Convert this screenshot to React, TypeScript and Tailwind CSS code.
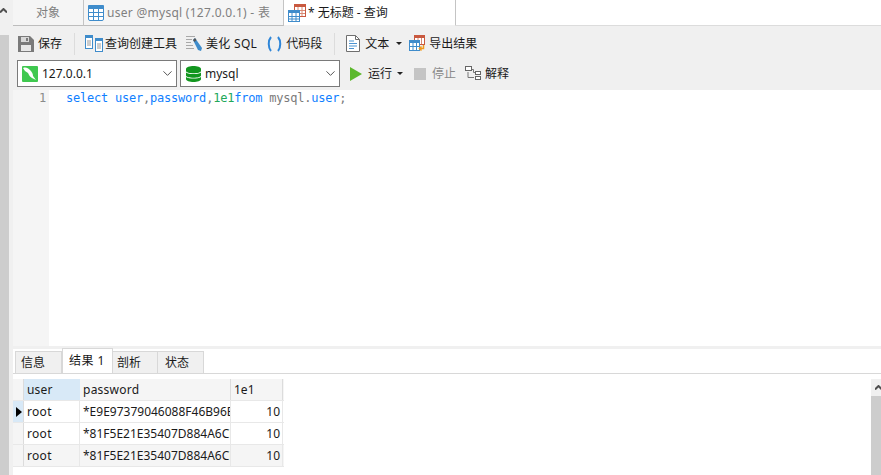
import { ChevronDown } from 'lucide-react';

const uiFont = { fontFamily: '"Noto Sans", "Noto Sans CJK SC", sans-serif' };

function GridIcon({ size = 16 }: { size?: number }) {
  return (
    <svg width={size} height={size} viewBox="0 0 16 16" className="shrink-0">
      <rect x="0.5" y="0.5" width="15" height="15" rx="1.5" fill="#fff" stroke="#3f8ccb" />
      <rect x="0" y="0" width="16" height="4" rx="1" fill="#3f8ccb" />
      <path d="M5.5 4v11M10.5 4v11M1 7.5h14M1 11.5h14" stroke="#3f8ccb" strokeWidth="1" />
    </svg>
  );
}

function QueryTabIcon() {
  return (
    <svg width="18" height="18" viewBox="0 0 18 18" className="shrink-0">
      <rect x="6.5" y="0.5" width="11" height="12" fill="#fff" stroke="#c9593f" />
      <rect x="6" y="0" width="12" height="3" fill="#c9593f" />
      <path d="M10 3v9M14 3v9M7 6.5h10M7 9.5h10" stroke="#d98a75" />
      <rect x="0.5" y="6.5" width="11" height="11" fill="#fff" stroke="#3f8ccb" />
      <rect x="0" y="6" width="12" height="3" fill="#3f8ccb" />
      <path d="M4 9v8M8 9v8M1 12.5h10M1 15h10" stroke="#3f8ccb" />
    </svg>
  );
}

function SaveIcon() {
  return (
    <svg width="16" height="16" viewBox="0 0 16 16" className="shrink-0">
      <path d="M0 0h12l4 4v12H0z" fill="#7a7a7a" />
      <rect x="3" y="1" width="8" height="5" fill="#d8d8d8" />
      <rect x="8" y="2" width="2" height="3" fill="#7a7a7a" />
      <rect x="3" y="9" width="10" height="6" fill="#e8e8e8" />
    </svg>
  );
}

function BuilderIcon() {
  return (
    <svg width="18" height="17" viewBox="0 0 18 17" className="shrink-0">
      <rect x="0.5" y="0.5" width="7" height="13" fill="#fff" stroke="#3f8ccb" />
      <rect x="0" y="0" width="8" height="3" fill="#3f8ccb" />
      <path d="M2 6h4M2 8h4M2 10h4" stroke="#9a9a9a" />
      <rect x="10.5" y="3.5" width="7" height="13" fill="#fff" stroke="#3f8ccb" />
      <rect x="10" y="3" width="8" height="3" fill="#3f8ccb" />
      <path d="M12 9h4M12 11h4M12 13h4" stroke="#9a9a9a" />
    </svg>
  );
}

function BeautifyIcon() {
  return (
    <svg width="17" height="17" viewBox="0 0 17 17" className="shrink-0">
      <path d="M0 1.5h9M0 4.5h6M0 7.5h5M0 10.5h7M0 13.5h8" stroke="#a8a8a8" strokeWidth="1" />
      <path d="M7 5l2-2 7 10-1 3-3-1z" fill="#3f8ccb" />
      <path d="M7 5l2-2 1.5 2-2 2z" fill="#555" />
    </svg>
  );
}

function SnippetIcon() {
  return (
    <svg width="15" height="16" viewBox="0 0 15 16" className="shrink-0">
      <path d="M4 1C1 4.5 1 11.5 4 15M11 1c3 3.5 3 10.5 0 14" fill="none" stroke="#2f86d8" strokeWidth="2" />
    </svg>
  );
}

function TextIcon() {
  return (
    <svg width="14" height="17" viewBox="0 0 14 17" className="shrink-0">
      <path d="M0.5 0.5h9l4 4v12h-13z" fill="#fff" stroke="#6f6f6f" />
      <path d="M9.5 0.5v4h4" fill="none" stroke="#6f6f6f" />
      <path d="M3 6h5M3 8.5h8M3 11h8M3 13.5h5" stroke="#4b93d1" />
    </svg>
  );
}

function ExportIcon() {
  return (
    <svg width="17" height="17" viewBox="0 0 17 17" className="shrink-0">
      <rect x="5.5" y="0.5" width="10" height="9" fill="#fff" stroke="#c9593f" />
      <rect x="5" y="0" width="11" height="3" fill="#c9593f" />
      <path d="M9 3v6M12.5 3v6" stroke="#d98a75" />
      <rect x="0.5" y="5.5" width="10" height="10" fill="#fff" stroke="#3f8ccb" />
      <rect x="0" y="5" width="11" height="3" fill="#3f8ccb" />
      <path d="M4 8v7M7.5 8v7M1 11.5h9" stroke="#3f8ccb" />
      <path d="M14.5 10v3.5h-4M12.5 11.5l-2 2 2 2" fill="none" stroke="#f09a1e" strokeWidth="1.5" />
    </svg>
  );
}

function DolphinIcon() {
  return (
    <svg width="16" height="16" viewBox="0 0 16 16" className="shrink-0">
      <rect width="16" height="16" rx="1" fill="#3fc84f" />
      <path d="M1 2c3-1 5 0 7 2 2 2 3 4 3 6l3 4-4-2c-2-1-3-3-4-5L3 5z" fill="#fff" />
    </svg>
  );
}

function DatabaseIcon() {
  return (
    <svg width="15" height="16" viewBox="0 0 15 16" className="shrink-0">
      <path d="M0 3c0-4 15-4 15 0v2c0 3-15 3-15 0z" fill="#12961f" />
      <path d="M0 6.5c3 2 12 2 15 0v3c0 3-15 3-15 0z" fill="#12961f" />
      <path d="M0 11c3 2 12 2 15 0v2c0 4-15 4-15 0z" fill="#12961f" />
    </svg>
  );
}

function ExplainIcon() {
  return (
    <svg width="16" height="15" viewBox="0 0 16 15" className="shrink-0">
      <path d="M3 6v5.5h6M6 3.5h2.5v3H11" fill="none" stroke="#777" />
      <rect x="0.5" y="0.5" width="6" height="4" fill="#fff" stroke="#666" />
      <rect x="10.5" y="5.5" width="5" height="3" fill="#fff" stroke="#666" />
      <rect x="10.5" y="10.5" width="5" height="3" fill="#fff" stroke="#666" />
    </svg>
  );
}

function ScrollArrow() {
  return (
    <svg width="7" height="5" viewBox="0 0 7 5" className="block">
      <path d="M0 4.5l3.5-3.5L7 4.5" fill="none" stroke="#505050" strokeWidth="2" />
    </svg>
  );
}

function Caret() {
  return <span className="block w-0 h-0 border-x-[3px] border-x-transparent border-t-[3px] border-t-[#222]" />;
}

function Divider() {
  return <div className="w-px h-[22px] bg-[#dcdcdc]" />;
}

function ComboBox({ padding, icon, label }: { padding: string; icon: React.ReactNode; label: string }) {
  return (
    <div className={`w-[160px] h-[27px] bg-white border border-[#7a7a7a] flex items-center ${padding} pr-[1px] text-[12px] text-[#1a1a1a]`}>
      {icon}
      <span className="ml-[4px] flex-1">{label}</span>
      <ChevronDown className="w-[15px] h-[15px] text-[#555]" strokeWidth={1.6} />
    </div>
  );
}

const rows = [
  { user: 'root', password: '*E9E97379046088F46B96BDA7', value: '10', current: true, height: 'h-[22px]' },
  { user: 'root', password: '*81F5E21E35407D884A6CD4A7', value: '10', current: false, height: 'h-[22px]' },
  { user: 'root', password: '*81F5E21E35407D884A6CD4A7', value: '10', current: false, height: 'h-[23px]' },
];

export default function App() {
  return (
    <div className="w-[881px] h-[475px] flex overflow-hidden bg-white text-[12px] text-[#1a1a1a]" style={uiFont}>
      <div className="w-[9px] shrink-0 flex flex-col bg-[#cdcdcd]">
        <div className="h-[35px] bg-[#f0f0f0] pt-[8px]">
          <ScrollArrow />
        </div>
      </div>
      <div className="w-[4px] shrink-0 bg-[#f0f0f0]" />

      <div className="flex-1 flex flex-col min-w-0">
        <div className="h-[26px] shrink-0 flex bg-white">
          <div className="w-[71px] flex items-center justify-center bg-[#f5f5f5] border-r border-b border-r-[#c4c4c4] border-b-[#bdbdbd] text-[#808080]">对象</div>
          <div className="w-[200px] flex items-center pl-[4px] gap-[3px] bg-[#f5f5f5] border-r border-b border-r-[#c4c4c4] border-b-[#bdbdbd] text-[#808080] tracking-[0.28px]">
            <GridIcon />
            <span>user @mysql (127.0.0.1) - 表</span>
          </div>
          <div className="w-[172px] flex items-center pl-[4px] gap-[2px] bg-white border-r border-b border-r-[#c4c4c4] border-b-[#f0f0f0] text-[#1a1a1a]">
            <QueryTabIcon />
            <span>* 无标题 - 查询</span>
          </div>
          <div className="flex-1 border-b border-[#dcdcdc]" />
        </div>

        <div className="h-[34px] shrink-0 bg-[#f0f0f0] flex items-center pl-[5px] pt-[1px]">
          <div className="flex items-center gap-[4px]"><SaveIcon /><span>保存</span></div>
          <div className="ml-[12px]"><Divider /></div>
          <div className="ml-[10px] flex items-center gap-[2px]"><BuilderIcon /><span>查询创建工具</span></div>
          <div className="ml-[9px] flex items-center gap-[3px]"><BeautifyIcon /><span className="tracking-[0.3px]">美化 SQL</span></div>
          <div className="ml-[10px] flex items-center gap-[4px]"><SnippetIcon /><span>代码段</span></div>
          <div className="ml-[12px]"><Divider /></div>
          <div className="ml-[11px] flex items-center gap-[5px]"><TextIcon /><span>文本</span></div>
          <div className="ml-[7px]"><Caret /></div>
          <div className="ml-[7px] flex items-center gap-[3px]"><ExportIcon /><span>导出结果</span></div>
        </div>

        <div className="h-[30px] shrink-0 bg-[#f0f0f0] flex items-start pl-[4px] gap-[3px]">
          <ComboBox padding="pl-[4px]" icon={<DolphinIcon />} label="127.0.0.1" />
          <ComboBox padding="pl-[5px]" icon={<DatabaseIcon />} label="mysql" />
          <div className="h-[27px] flex items-center ml-[7px]">
            <span className="block w-0 h-0 border-y-[7px] border-y-transparent border-l-[12px] border-l-[#5cb82c]" />
            <span className="ml-[6px]">运行</span>
            <span className="ml-[5px]"><Caret /></span>
            <span className="block ml-[11px] w-[12px] h-[12px] bg-[#c4c4c4]" />
            <span className="ml-[6px] text-[#8a8a8a]">停止</span>
            <span className="ml-[9px]"><ExplainIcon /></span>
            <span className="ml-[4px]">解释</span>
          </div>
        </div>

        <div className="h-[256px] shrink-0 flex bg-white font-['DejaVu_Sans_Mono',monospace] text-[12px] tracking-[-0.22px] leading-[17px]">
          <div className="w-[36px] shrink-0 bg-[#f5f5f5] text-right pr-[3px] text-[#8a8a8a]">1</div>
          <div className="pl-[17px] whitespace-pre text-[#7a7a7a]">
            <span className="text-[#0f80ff]">select user</span>,<span className="text-[#0f80ff]">password</span>,<span className="text-[#22a85a]">1e1</span><span className="text-[#0f80ff]">from</span> mysql.<span className="text-[#0f80ff]">user</span>;
          </div>
        </div>

        <div className="h-[3px] shrink-0 bg-[#f0f0f0]" />

        <div className="h-[25px] shrink-0 flex items-end pl-[2px] border-b border-[#d8d8d8] bg-white">
          <div className="w-[47px] h-[22px] bg-[#f0f0f0] border border-b-0 border-[#d8d8d8] flex items-center pl-[5px]">信息</div>
          <div className="w-[51px] h-[25px] bg-white border border-b-0 border-[#d8d8d8] flex items-center pl-[6px]"><span className="tracking-[0.5px]">结果 1</span></div>
          <div className="w-[45px] h-[22px] bg-[#f0f0f0] border border-b-0 border-l-0 border-[#d8d8d8] flex items-center pl-[4px]">剖析</div>
          <div className="w-[46px] h-[22px] bg-[#f0f0f0] border border-b-0 border-l-0 border-[#d8d8d8] flex items-center pl-[7px]">状态</div>
        </div>

        <div className="flex-1 flex pt-[5px] min-h-0">
          <div className="w-[271px] shrink-0">
            <div className="flex h-[21px] bg-[#f5f5f5]">
              <div className="w-[11px] border-r border-[#dcdcdc]" />
              <div className="w-[56px] bg-[#d8e9f7] flex items-center pl-[3px] tracking-[0.2px]">user</div>
              <div className="w-[151px] border-r border-[#dcdcdc] flex items-center pl-[3px] tracking-[0.25px]">password</div>
              <div className="w-[52px] border-r border-[#dcdcdc] flex items-center pl-[3px]">1e1</div>
            </div>
            {rows.map((row, i) => (
              <div key={i} className={`flex ${row.height} border-t border-[#e8e8e8] ${i === 2 ? 'bg-[#f5f5f5] border-b' : 'bg-white'}`}>
                <div className={`w-[11px] border-r border-[#dcdcdc] flex items-center pl-[3px] ${row.current ? 'bg-[#d8e9f7]' : 'bg-[#f5f5f5]'}`}>
                  {row.current && <span className="block w-0 h-0 border-y-[5px] border-y-transparent border-l-[6px] border-l-black" />}
                </div>
                <div className="w-[56px] border-r border-[#e8e8e8] flex items-center pl-[3px] tracking-[0.3px]">{row.user}</div>
                <div className="w-[151px] border-r border-[#e8e8e8] flex items-center pl-[3px] overflow-hidden whitespace-nowrap">{row.password}</div>
                <div className="w-[52px] border-r border-[#e8e8e8] flex items-center justify-end pr-[2px]">{row.value}</div>
              </div>
            ))}
          </div>
          <div className="flex-1" />
          <div className="w-[10px] shrink-0 flex flex-col bg-[#cdcdcd]">
            <div className="h-[17px] bg-[#f0f0f0] pt-[6px] pl-[4px] overflow-hidden">
              <ScrollArrow />
            </div>
          </div>
        </div>
      </div>
    </div>
  );
}
